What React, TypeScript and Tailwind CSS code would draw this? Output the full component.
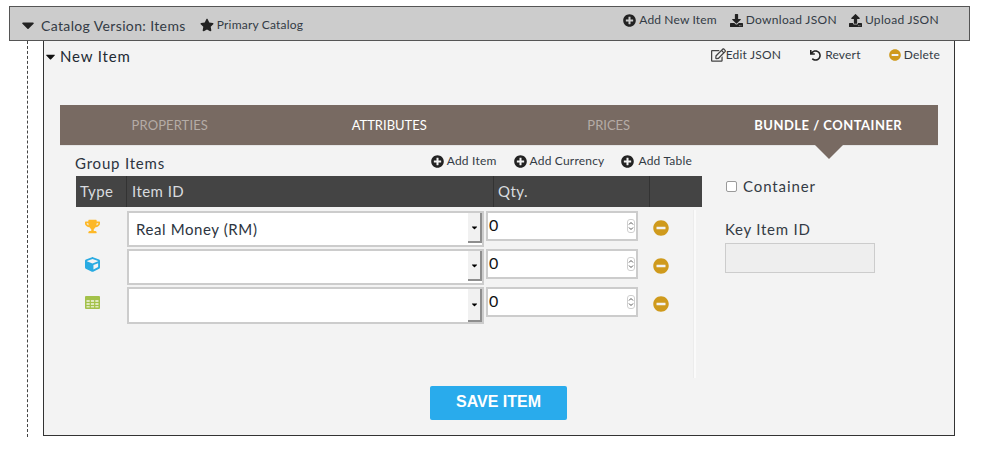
import React from "react";
import {
  FaCaretDown,
  FaStar,
  FaPlusCircle,
  FaDownload,
  FaUpload,
  FaRegEdit,
  FaUndo,
  FaMinusCircle,
  FaTrophy,
  FaCube,
} from "react-icons/fa";

const headerActions = [
  { label: "Add New Item", icon: <FaPlusCircle className="w-[13px] h-[13px]" />, cls: "tracking-[0.15px] mr-[1px]" },
  { label: "Download JSON", icon: <FaDownload className="w-[13px] h-[13px]" />, cls: "tracking-[0.3px]" },
  { label: "Upload JSON", icon: <FaUpload className="w-[13px] h-[13px]" />, cls: "tracking-[0.3px]" },
];

function TableIcon() {
  return (
    <svg width="15" height="13" viewBox="0 0 15 13" className="mt-[1px]">
      <rect width="15" height="13" rx="1" fill="#a3c14a" />
      <path
        d="M1.5 4h3.2v2h-3.2zM5.9 4h3.2v2h-3.2zM10.3 4h3.2v2h-3.2zM1.5 7h3.2v2h-3.2zM5.9 7h3.2v2h-3.2zM10.3 7h3.2v2h-3.2zM1.5 10h3.2v1.6h-3.2zM5.9 10h3.2v1.6h-3.2zM10.3 10h3.2v1.6h-3.2z"
        fill="#dfe9bd"
      />
    </svg>
  );
}

const rows = [
  { value: "Real Money (RM)", icon: <FaTrophy className="w-[15px] h-[15px] text-[#fdb827]" />, h: "h-[36px]", arrow: "h-[30px]", mb: "mb-[2px]" },
  { value: "", icon: <FaCube className="w-[15px] h-[15px] text-[#29abe2]" />, h: "h-[36px]", arrow: "h-[30px]", mb: "mb-[2px]" },
  { value: "", icon: <TableIcon />, h: "h-[37px]", arrow: "h-[33px]", mb: "" },
];

function SelectBox({ value, h, arrow }: { value: string; h: string; arrow: string }) {
  return (
    <div className={`w-[357px] ${h} bg-white border-2 border-[#cccccc] flex overflow-hidden`}>
      <div className="flex-1 h-[22px] mt-[4px] overflow-hidden pl-[7px] text-[15px] leading-[24px] text-[#2c3440] tracking-[0.6px]">
        {value}
      </div>
      <div className={`w-[14px] ${arrow} bg-[#f1f1f1] border-r-2 border-b-2 border-[#8e8e8e] flex items-center justify-center`}>
        <FaCaretDown className="w-[9px] h-[9px] text-black" />
      </div>
    </div>
  );
}

function NumberBox() {
  return (
    <div className="w-[152px] h-[30px] bg-white border-2 border-[#cccccc] flex items-center justify-between pl-[1px] pr-[1px]">
      <span className="text-[16px] leading-none text-[#111111] -mt-[2px]">0</span>
      <div className="w-[8px] h-[14px] rounded-[3px] border border-[#cfcfcf] flex flex-col items-center justify-center">
        <svg width="6" height="10" viewBox="0 0 6 10">
          <path d="M1 3.5 3 1.5 5 3.5M1 6.5 3 8.5 5 6.5" fill="none" stroke="#555555" strokeWidth="1" />
        </svg>
      </div>
    </div>
  );
}

function Row({ row }: { row: (typeof rows)[number] }) {
  return (
    <div className={`flex items-start ${row.mb}`}>
      <div className="w-[51px] pt-[8px] pl-[9px]">{row.icon}</div>
      <SelectBox value={row.value} h={row.h} arrow={row.arrow} />
      <div className="ml-[2px]">
        <NumberBox />
      </div>
      <FaMinusCircle className="w-[16px] h-[16px] text-[#cf9a1c] ml-[15px] mt-[9px]" />
    </div>
  );
}

export default function App() {
  return (
    <div
      className="w-[982px] h-[451px] bg-white overflow-hidden pt-[6px] text-[#333b45]"
      style={{ fontFamily: '"Lato", "Open Sans", sans-serif' }}
    >
      <div className="ml-[9px] w-[961px] h-[35px] bg-[#cccccc] border border-[#555555] flex items-start justify-between">
        <div className="flex items-center h-[36px] pl-[8px]">
          <FaCaretDown className="w-[20px] h-[20px] text-[#222222]" />
          <span className="ml-[3px] text-[14px] tracking-[0.37px]">Catalog Version: Items</span>
          <FaStar className="ml-[14px] w-[14px] h-[14px] text-[#222222]" />
          <span className="ml-[3px] text-[12px] tracking-[0.2px]">Primary Catalog</span>
        </div>
        <div className="flex items-center h-[26px] gap-[12px] pr-[30px]">
          {headerActions.map((a) => (
            <div key={a.label} className={`flex items-center gap-[3px] text-[12px] text-[#333b45] ${a.cls}`}>
              <span className="text-[#222222]">{a.icon}</span>
              {a.label}
            </div>
          ))}
        </div>
      </div>

      <div className="flex">
        <div className="ml-[27px] w-[1px] h-[396px] border-l border-dashed border-[#444444]" />
        <div className="ml-[15px] w-[912px] h-[395px] bg-[#f3f3f3] border-l border-r border-b border-[#333333]">
          <div className="flex justify-between h-[64px]">
            <div className="flex items-center h-[31px] text-[15px] tracking-[0.85px] text-[#222a33]">
              <FaCaretDown className="-ml-[1px] w-[15px] h-[15px] text-[#111111] mr-[2px]" />
              New Item
            </div>
            <div className="flex items-center h-[28px] text-[12px] tracking-[0.2px] pr-[14px]">
              <FaRegEdit className="w-[15px] h-[14px] text-[#444444]" />
              Edit JSON
              <FaUndo className="ml-[29px] mr-[4px] w-[11px] h-[11px] text-[#222222]" />
              Revert
              <FaMinusCircle className="ml-[28px] mr-[3px] w-[12px] h-[12px] text-[#cf9a1c]" />
              Delete
            </div>
          </div>

          <div className="ml-[16px] w-[878px] h-[41px] bg-[#786a62] border-b border-[#e5e5e5] grid grid-cols-4 relative text-[13px] pt-[1px]">
            <div className="flex items-center justify-center tracking-[0.1px] text-[#b5aca6]">PROPERTIES</div>
            <div className="flex items-center justify-center text-white">ATTRIBUTES</div>
            <div className="flex items-center justify-center text-[#b5aca6]">PRICES</div>
            <div className="flex items-center justify-center font-bold text-white tracking-[0.48px]">BUNDLE / CONTAINER</div>
            <div className="absolute left-[755px] top-[40px] w-0 h-0 border-l-[14px] border-r-[14px] border-t-[14px] border-l-transparent border-r-transparent border-t-[#786a62]" />
          </div>

          <div className="flex">
            <div className="ml-[32px] w-[626px]">
              <div className="flex justify-between h-[30px] pr-[10px]">
                <div className="pt-[8px] text-[15px] leading-[18px] tracking-[0.8px] text-[#2c3440]">
                  <span className="-ml-[1px]">Group Items</span>
                </div>
                <div className="flex items-center gap-[10px] h-[30px] text-[12px] tracking-[0.2px] text-[#333b45]">
                  <span className="flex items-center gap-[1px]"><FaPlusCircle className="w-[13px] h-[13px] text-[#222222]" /><span className="ml-[2px]">Add Item</span></span>
                  <span className="flex items-center gap-[1px] ml-[7px]"><FaPlusCircle className="w-[13px] h-[13px] text-[#222222]" /><span className="ml-[2px]">Add Currency</span></span>
                  <span className="flex items-center gap-[1px] ml-[7px]"><FaPlusCircle className="w-[13px] h-[13px] text-[#222222]" /><span className="ml-[3px]">Add Table</span></span>
                </div>
              </div>
              <div className="h-[31px] bg-[#444444] flex text-[15px] tracking-[0.45px] text-[#d8dbdf]">
                <div className="w-[51px] pl-[4px] flex items-center border-r border-[#333333]">Type</div>
                <div className="w-[367px] pl-[5px] flex items-center border-r border-[#333333]">Item ID</div>
                <div className="w-[156px] pl-[4px] flex items-center border-r border-[#333333]">Qty.</div>
              </div>
              <div className="pt-[4px]">
                {rows.map((r, i) => (
                  <Row key={i} row={r} />
                ))}
              </div>
            </div>

            <div className="mt-[64px] ml-[-9px] w-[3px] h-[168px] bg-[#fafafa] border-l border-[#ececec]" />

            <div className="ml-[29px] pt-[29px]">
              <label className="flex items-center h-[23px] text-[15px] tracking-[0.9px] text-[#333b45] ml-[1px]">
                <span className="w-[11px] h-[11px] rounded-[2px] bg-white border border-[#9a9a9a] mr-[6px]" />
                Container
              </label>
              <div className="mt-[21px] text-[15px] leading-[20px] tracking-[0.75px] text-[#333b45]">Key Item ID</div>
              <div className="mt-[4px] w-[150px] h-[30px] bg-[#eeeeee] border border-[#cccccc]" />
            </div>
          </div>

          <div className="pl-[386px] pt-[8px]">
            <button className="w-[137px] h-[34px] pb-[3px] rounded-[2px] bg-[#29abec] text-white font-bold text-[16px] leading-none" style={{ fontFamily: '"Liberation Sans", sans-serif' }}>
              SAVE ITEM
            </button>
          </div>
        </div>
      </div>
    </div>
  );
}
